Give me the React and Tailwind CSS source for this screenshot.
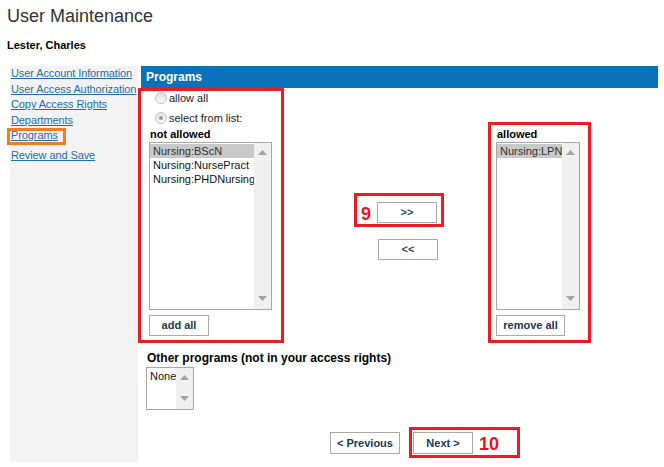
import { useState } from "react"

const ARROW = "#a3a3a3"

const Scroll = () => (
	<div className="w-[17px] h-full bg-[#f0f0f0] flex flex-col items-center justify-between pt-[7px] pb-[8px]">
		<svg width="9" height="5" viewBox="0 0 9 5"><path d="M0 5 L4.5 0 L9 5 Z" fill={ARROW} /></svg>
		<svg width="9" height="5" viewBox="0 0 9 5"><path d="M0 0 L4.5 5 L9 0 Z" fill={ARROW} /></svg>
	</div>
)

const ListBox = ({ items, selected, className }) => (
	<div className={"flex border border-[#a7a7a7] bg-white " + className}>
		<div className="flex-1 flex flex-col pt-[1px] min-w-0 overflow-hidden">
			{items.map(item => (
				<div
					key={item}
					className={item === selected
						? "h-[14px] leading-[14px] pl-[3px] bg-[#c9c9c9] text-[#333] text-[11px] whitespace-nowrap"
						: "h-[14px] leading-[14px] pl-[3px] text-[#111] text-[11px] whitespace-nowrap"}
				>
					{item}
				</div>
			))}
		</div>
		<Scroll />
	</div>
)

const Btn = ({ children, className }) => (
	<button className={"border border-[#a9a9a9] bg-white text-[11px] font-bold text-[#1b3756] flex items-center justify-center " + className}>
		{children}
	</button>
)

const Radio = ({ checked, label, className }) => (
	<div className={"flex items-center h-[14px] " + className}>
		<span className="ml-[14px] w-[12px] h-[12px] rounded-full border border-[#c4c4c4] bg-gradient-to-b from-[#e2e2e2] to-[#fafafa] flex items-center justify-center">
			{checked && <span className="w-[4px] h-[4px] rounded-full bg-[#9b9b9b]" />}
		</span>
		<span className="ml-[2px] text-[11px] text-[#222]">{label}</span>
	</div>
)

const links = ["User Account Information", "User Access Authorization", "Copy Access Rights", "Departments"]

export default function App() {
	const [notAllowed] = useState(["Nursing:BScN", "Nursing:NursePract", "Nursing:PHDNursing"])
	const [allowed] = useState(["Nursing:LPN"])

	return (
		<div className="w-[664px] h-[467px] bg-white overflow-hidden font-['Liberation_Sans',Arial,sans-serif]">
			<div className="pl-[7px] pt-[5px] text-[18px] leading-[22px] text-[#333]">User Maintenance</div>
			<div className="pl-[7px] mt-[11px] text-[11px] leading-[14px] font-bold text-black">Lester, Charles</div>

			<div className="flex items-start mt-[14px]">
				<div className="ml-[10px] w-[128px] h-[396px] bg-[#f3f3f3] pl-[1px] text-[11px] tracking-[-0.1px] leading-[15.5px]">
					{links.map(l => (
						<div key={l}><a className="text-[#1f6db5] underline whitespace-nowrap">{l}</a></div>
					))}
					<div>
						<a className="relative text-[#1f6db5] underline">
							Programs
							<span className="absolute left-[-4px] top-[-1px] w-[59px] h-[17px] border-[3px] border-[#f47c20]" />
						</a>
					</div>
					<div className="mt-[4px]"><a className="text-[#1f6db5] underline">Review and Save</a></div>
				</div>

				<div className="w-[521px]">
					<div className="ml-[3px] w-[517px] h-[22px] bg-[#0a72bb] text-white font-bold text-[12px] leading-[22px] pl-[5px]">Programs</div>

					<div className="flex items-start">
						<div className="w-[146px] h-[255px] border-[3px] border-[#ed1c24]">
							<Radio label="allow all" />
							<Radio label="select from list:" checked className="mt-[6px]" />
							<div className="mt-[2px] pl-[9px] text-[11px] leading-[14px] font-bold text-black">not allowed</div>
							<ListBox items={notAllowed} selected="Nursing:BScN" className="mt-[1px] ml-[8px] w-[123px] h-[168px]" />
							<Btn className="mt-[5px] ml-[8px] w-[60px] h-[21px]">add all</Btn>
						</div>

						<div className="w-[204px] pt-[105px] pl-[70px]">
							<div className="w-[90px] h-[34px] border-[3px] border-[#ed1c24] flex items-start">
								<span className="ml-[4px] mt-[9px] text-[18px] leading-[18px] font-bold text-[#e8141c]">9</span>
								<Btn className="ml-[6px] mt-[6px] w-[60px] h-[21px] text-[10px] text-[#1f4a78]">&gt;&gt;</Btn>
							</div>
							<Btn className="mt-[12px] ml-[24px] w-[60px] h-[21px] text-[10px] text-[#1f4a78]">&lt;&lt;</Btn>
						</div>

						<div className="mt-[34px] w-[103px] h-[221px] border-[3px] border-[#ed1c24]">
							<div className="mt-[2px] pl-[6px] text-[11px] leading-[14px] font-bold text-black">allowed</div>
							<ListBox items={allowed} selected="Nursing:LPN" className="mt-[1px] ml-[5px] w-[84px] h-[168px]" />
							<Btn className="mt-[5px] ml-[5px] w-[69px] h-[21px]">remove all</Btn>
						</div>
					</div>

					<div className="mt-[8px] pl-[9px] text-[12px] leading-[14px] font-bold text-black">Other programs (not in your access rights)</div>
					<ListBox items={["None"]} selected="" className="mt-[2px] ml-[8px] w-[48px] h-[43px]" />

					<div className="flex items-start mt-[17px]">
						<Btn className="ml-[192px] mt-[5px] w-[70px] h-[22px]">&lt; Previous</Btn>
						<div className="ml-[9px] w-[111px] h-[31px] border-[3px] border-[#ed1c24] flex items-start">
							<Btn className="ml-[1px] mt-[2px] w-[60px] h-[22px]">Next &gt;</Btn>
							<span className="ml-[6px] mt-[5px] text-[18px] leading-[18px] font-bold text-[#e8141c]">10</span>
						</div>
					</div>
				</div>
			</div>
		</div>
	)
}
